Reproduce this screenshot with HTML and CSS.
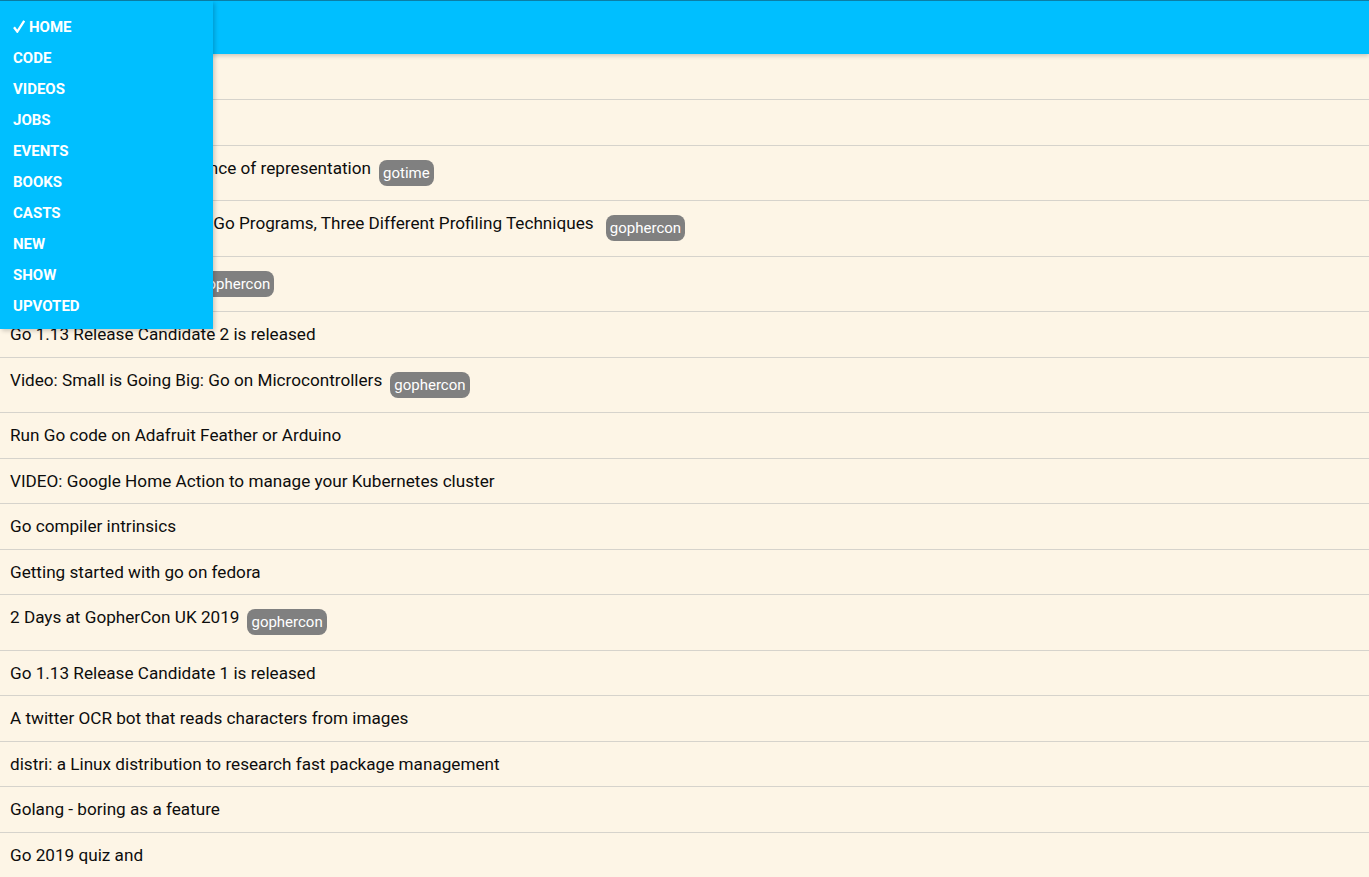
FILE: index.html
```html
<!DOCTYPE html>
<html>
<head>
<meta charset="utf-8">
<title>Go News</title>
<link rel="stylesheet" href="styles.css">
</head>
<body>
<header class="topbar"></header>
<nav class="menu">
  <a class="menu-item" href="#"><svg class="check" width="12" height="13" viewBox="0 0 12 13"><path d="M1 7.2 L4.3 11.6 L11.2 0.8" fill="none" stroke="#fff" stroke-width="2.3" stroke-linejoin="miter"/></svg>HOME</a>
  <a class="menu-item" href="#">CODE</a>
  <a class="menu-item" href="#">VIDEOS</a>
  <a class="menu-item" href="#">JOBS</a>
  <a class="menu-item" href="#">EVENTS</a>
  <a class="menu-item" href="#">BOOKS</a>
  <a class="menu-item" href="#">CASTS</a>
  <a class="menu-item" href="#">NEW</a>
  <a class="menu-item" href="#">SHOW</a>
  <a class="menu-item" href="#">UPVOTED</a>
</nav>
<main class="list">
  <div class="row"><span class="title">Go modules by example</span></div>
  <div class="row"><span class="title">Go 1.13 is coming</span></div>
  <div class="row"><span class="title">Go Time #95: The importance of representation</span><span class="tag">gotime</span></div>
  <div class="row"><span class="title">Video: Dave Cheney - Two&thinsp; Go Programs, Three Different Profiling Techniques </span><span class="tag">gophercon</span></div>
  <div class="row"><span class="title">Video: The Go compiler</span><span class="tag">gophercon</span></div>
  <div class="row"><span class="title">Go 1.13 Release Candidate 2 is released</span></div>
  <div class="row"><span class="title">Video: Small is Going Big: Go on Microcontrollers</span><span class="tag">gophercon</span></div>
  <div class="row"><span class="title">Run Go code on Adafruit Feather or Arduino</span></div>
  <div class="row"><span class="title">VIDEO: Google Home Action to manage your Kubernetes cluster</span></div>
  <div class="row"><span class="title">Go compiler intrinsics</span></div>
  <div class="row"><span class="title">Getting started with go on fedora</span></div>
  <div class="row"><span class="title">2 Days at GopherCon UK 2019</span><span class="tag">gophercon</span></div>
  <div class="row"><span class="title">Go 1.13 Release Candidate 1 is released</span></div>
  <div class="row"><span class="title">A twitter OCR bot that reads characters from images</span></div>
  <div class="row"><span class="title">distri: a Linux distribution to research fast package management</span></div>
  <div class="row"><span class="title">Golang - boring as a feature</span></div>
  <div class="row"><span class="title">Go 2019 quiz and</span></div>
</main>
</body>
</html>
```

FILE: styles.css
```css
html, body {
  margin: 0;
  padding: 0;
}

body {
  background: #fdf5e6;
  font-family: Roboto, "Liberation Sans", sans-serif;
  color: #0d0d0d;
  overflow: hidden;
}

.topbar {
  height: 53px;
  background: #00bfff;
  border-top: 1px solid #0b7ea6;
  box-shadow: 0 2px 4px rgba(0, 0, 0, 0.18);
  position: relative;
  z-index: 1;
}

.menu {
  position: absolute;
  top: 1px;
  left: 0;
  width: 213px;
  box-sizing: border-box;
  padding: 11px 0 7px 13px;
  background: #00bfff;
  box-shadow: 2px 2px 4px rgba(0, 0, 0, 0.18);
  z-index: 2;
  display: flex;
  flex-direction: column;
}

.menu-item {
  color: #fff;
  text-decoration: none;
  font-weight: 700;
  font-size: 15px;
  line-height: 31px;
  height: 31px;
  white-space: nowrap;
}

.check {
  display: inline-block;
  vertical-align: -1px;
  margin-right: 4px;
}

.list {
  margin-top: 0.5px;
}

.row {
  padding: 10px 10px;
  line-height: 24.5px;
  font-size: 17.15px;
  border-bottom: 1px solid #d6d3cc;
  white-space: nowrap;
}

.tag {
  display: inline-block;
  vertical-align: top;
  margin: 4px 0 4.6px 8px;
  padding: 0 4px;
  height: 26px;
  line-height: 27px;
  font-size: 15px;
  color: #fff;
  background: #808080;
  border-radius: 8px;
}
```
